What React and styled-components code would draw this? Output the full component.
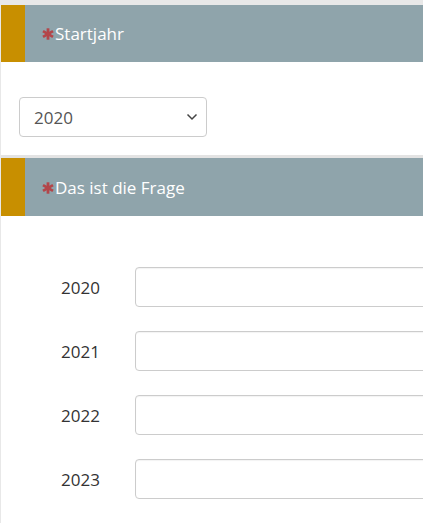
import React from "react";
import styled, { createGlobalStyle } from "styled-components";

const Global = createGlobalStyle`
  html, body { margin: 0; padding: 0; background: #e8e8e8; }
  body { font-family: "Open Sans", "Liberation Sans", sans-serif; overflow: hidden; }
`;

const Page = styled.div`
  margin: 5px 0 0 1px;
  background: #fff;
  height: 518px;
  overflow: hidden;
`;

const Question = styled.section`
  background: #fff;
  & + & { border-top: 3px solid #e3e3e3; }
`;

const Header = styled.div`
  display: flex;
  height: ${(p) => p.$h}px;
  background: #8fa4ab;
`;

const Accent = styled.div`
  width: 24px;
  flex: none;
  background: #c88f00;
`;

const Title = styled.div`
  display: flex;
  align-items: center;
  padding-left: 17px;
  color: #fff;
  font-size: 17px;
`;

const Star = styled.svg`
  width: 12px;
  height: 12px;
  margin-right: 1px;
  margin-top: 1px;
`;

const Body = styled.div`
  padding: ${(p) => p.$pad};
`;

const SelectBox = styled.div`
  width: 188px;
  height: 40px;
  box-sizing: border-box;
  border: 1px solid #ccc;
  border-radius: 4px;
  display: flex;
  align-items: center;
  justify-content: space-between;
  padding: 0 8px 0 14px;
  color: #555;
  font-size: 17px;
`;

const Row = styled.div`
  display: flex;
  align-items: center;
  height: 40px;
  & + & { margin-top: 24px; }
`;

const Label = styled.div`
  width: 74px;
  padding-left: 60px;
  flex: none;
  color: #333;
  font-size: 17px;
`;

const Input = styled.div`
  width: 320px;
  flex: none;
  height: 40px;
  box-sizing: border-box;
  border: 1px solid #ccc;
  border-radius: 4px;
  box-shadow: inset 0 1px 1px rgba(0,0,0,0.05);
`;

const Asterisk = () => (
  <Star viewBox="0 0 12 12">
    <g stroke="#b3464a" strokeWidth="2.8" strokeLinecap="butt">
      <line x1="6" y1="0.3" x2="6" y2="11.7" />
      <line x1="1" y1="3.1" x2="11" y2="8.9" />
      <line x1="1" y1="8.9" x2="11" y2="3.1" />
    </g>
  </Star>
);

const Chevron = () => (
  <svg width="12" height="8" viewBox="0 0 12 8">
    <path d="M1.5 1.5 L6 6 L10.5 1.5" fill="none" stroke="#444" strokeWidth="1.5" />
  </svg>
);

export default function App() {
  return (
    <>
      <Global />
      <Page>
        <Question>
          <Header $h={57}>
            <Accent />
            <Title><Asterisk />Startjahr</Title>
          </Header>
          <Body $pad="35px 0 18px 18px">
            <SelectBox>
              <span>2020</span>
              <Chevron />
            </SelectBox>
          </Body>
        </Question>
        <Question>
          <Header $h={58}>
            <Accent />
            <Title><Asterisk />Das ist die Frage</Title>
          </Header>
          <Body $pad="51px 0 0 0">
            {["2020", "2021", "2022", "2023"].map((y) => (
              <Row key={y}>
                <Label>{y}</Label>
                <Input />
              </Row>
            ))}
          </Body>
        </Question>
      </Page>
    </>
  );
}
